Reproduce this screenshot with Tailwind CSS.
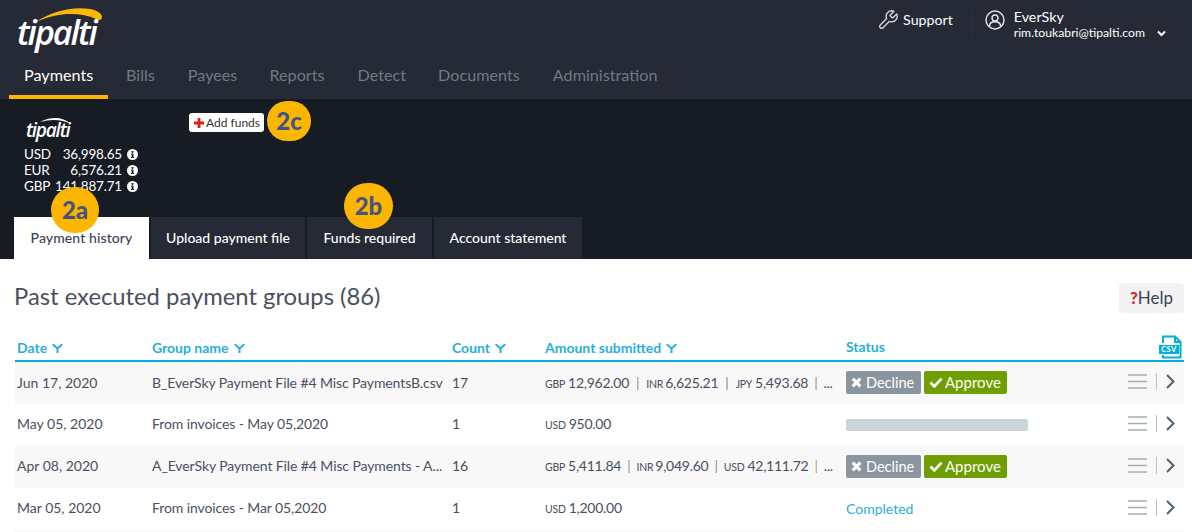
<!DOCTYPE html>
<html lang="en">
<head>
  <meta charset="UTF-8" />
  <title>Payments - Tipalti</title>
  <script src="https://cdn.jsdelivr.net/npm/@tailwindcss/browser@4"></script>
</head>
<body class="bg-white font-['Lato',sans-serif] text-[#3b4256] w-[1192px] h-[532px] overflow-hidden">

  <!-- top nav -->
  <header class="bg-[#252a36] h-[99px] flex flex-col relative">
    <div class="h-[54px] flex justify-between">
      <div class="relative ml-[18px] mt-[7px] w-[90px] h-[44px]">
        <svg class="absolute left-0 top-0 overflow-visible" width="90" height="20" viewBox="0 0 90 20"><path d="M18 15 C32 5 54 -1 72 2 C78 3 84 6 84 10 C84 13 81 14 78 12 C62 5 40 5 18 15 Z" fill="#fdb600"/></svg>
        <span class="absolute -left-[1px] top-[3px] text-[34px] leading-[44px] font-semibold italic text-white font-['Open_Sans',sans-serif] tracking-[-2px]">tipalti</span>
      </div>
      <div class="flex items-start pt-[8px]">
        <div class="flex items-center mt-[1px]">
          <svg class="w-[22px] h-[22px]" viewBox="0 0 24 24" fill="none" stroke="#d5d7da" stroke-width="1.5" stroke-linejoin="round"><path d="M14.7 6.3a1 1 0 0 0 0 1.4l1.6 1.6a1 1 0 0 0 1.4 0l3.77-3.77a6 6 0 0 1-7.94 7.94l-6.91 6.91a2.12 2.12 0 0 1-3-3l6.91-6.91a6 6 0 0 1 7.94-7.94l-3.76 3.76z"/></svg>
          <span class="ml-[4px] text-[14.2px] text-white">Support</span>
        </div>
        <div class="w-px h-[24px] bg-[#2e3340] ml-[18px] mr-[13px] mt-[4px]"></div>
        <svg class="w-[20px] h-[20px] mt-[2px]" viewBox="0 0 20 20" fill="none" stroke="#e6e7e9" stroke-width="1.4"><circle cx="10" cy="10" r="9"/><circle cx="10" cy="8" r="3"/><path d="M4.5 16c0-3 2.5-4.2 5.5-4.2s5.500 1.200 5.500 4.200"/></svg>
        <div class="ml-[9px] flex flex-col text-white">
          <span class="text-[14.3px] leading-[17px]">EverSky</span>
          <span class="text-[12.2px] leading-[15px] flex items-center">rim.toukabri@tipalti.com
            <svg class="ml-[12px] mt-[2px] w-[9px] h-[7px]" viewBox="0 0 9 7" fill="none" stroke="#fff" stroke-width="2"><path d="M1 1.500l3.500 3.500 3.500-3.500"/></svg>
          </span>
        </div>
        <div class="w-[26px]"></div>
      </div>
    </div>
    <nav class="flex ml-[9px] h-[45px] text-[16.2px] text-[#6f7a86]">
      <a class="px-[15px] pt-[9px] text-white border-b-[4px] border-[#fdb600] h-[45px] w-[99px] whitespace-nowrap">Payments</a>
      <a class="ml-[3px] px-[15px] pt-[9px]">Bills</a>
      <a class="px-[15px] pt-[9px] ml-[3px]">Payees</a>
      <a class="px-[15px] pt-[9px] ml-[2px]">Reports</a>
      <a class="px-[15px] pt-[9px] ml-[3px]">Detect</a>
      <a class="px-[15px] pt-[9px] ml-[2px]">Documents</a>
      <a class="px-[15px] pt-[9px] ml-[3px]">Administration</a>
    </nav>
  </header>

  <!-- funds band -->
  <section class="bg-[#171b24] h-[160px] relative flex flex-col justify-between">
    <div class="flex pl-[24px] pt-[14px] items-start">
      <div class="w-[165px]">
        <div class="relative w-[50px] h-[26px] ml-[2px] -mt-[1px]">
          <svg class="absolute left-[14px] top-[4px] overflow-visible" width="32" height="9" viewBox="0 0 32 9"><path d="M0 6 C10 1 22 0 31 8 C22 3 10 3 0 6 Z" fill="#fff"/></svg>
          <span class="absolute left-0 top-[7px] text-[19px] leading-[22px] font-semibold italic text-white font-['Open_Sans',sans-serif] tracking-[-1.2px]">tipalti</span>
        </div>
        <div class="text-white text-[13.5px] tracking-[-0.2px] leading-[16px] mt-[8px] w-[114px] grid grid-cols-[26px_1fr_16px] items-center whitespace-nowrap">
          <span>USD</span><span class="text-right">36,998.65</span><span class="text-right"><svg class="inline w-[11px] h-[11px] align-[-1px]" viewBox="0 0 12 12"><circle cx="6" cy="6" r="6" fill="#fff"/><path d="M5 2.200h2v1.800h-2zM4.500 5h2.500v3.800h.8v1h-3.400v-1h.7v-2.800h-.6z" fill="#171b24"/></svg></span>
          <span>EUR</span><span class="text-right">6,576.21</span><span class="text-right"><svg class="inline w-[11px] h-[11px] align-[-1px]" viewBox="0 0 12 12"><circle cx="6" cy="6" r="6" fill="#fff"/><path d="M5 2.200h2v1.800h-2zM4.500 5h2.500v3.800h.8v1h-3.400v-1h.7v-2.800h-.6z" fill="#171b24"/></svg></span>
          <span>GBP</span><span class="text-right">141,887.71</span><span class="text-right"><svg class="inline w-[11px] h-[11px] align-[-1px]" viewBox="0 0 12 12"><circle cx="6" cy="6" r="6" fill="#fff"/><path d="M5 2.200h2v1.800h-2zM4.500 5h2.500v3.800h.8v1h-3.400v-1h.7v-2.800h-.6z" fill="#171b24"/></svg></span>
        </div>
      </div>
      <button class="bg-white rounded-[3px] h-[19px] w-[75px] flex items-center pl-[5px] text-[12px] text-[#333]">
        <svg class="w-[10px] h-[10px] mr-[2px]" viewBox="0 0 9 9"><path d="M3.200 0h2.600v3.200h3.200v2.600h-3.200v3.200h-2.600v-3.200h-3.200v-2.600h3.200z" fill="#d9261c"/></svg>Add funds
      </button>
    </div>

    <div class="flex pl-[14px] h-[42px] text-[14px] gap-[2px] text-white font-medium">
      <a class="w-[135px] pb-[2px] bg-white text-[#3b4256] flex items-center justify-center tracking-[0.1px]">Payment history</a>
      <a class="w-[154px] pb-[2px] bg-[#252a36] flex items-center justify-center">Upload payment file</a>
      <a class="w-[125px] pb-[2px] bg-[#252a36] flex items-center justify-center">Funds required</a>
      <a class="w-[148px] pb-[2px] bg-[#252a36] flex items-center justify-center">Account statement</a>
    </div>

    <!-- callout badges -->
    <span class="absolute left-[51px] top-[88px] w-[48px] h-[46px] rounded-full bg-[#fdb600] text-[#45557f] text-[24px] font-black flex items-center justify-center">2a</span>
    <span class="absolute left-[344px] top-[84px] w-[49px] h-[46px] rounded-full bg-[#fdb600] text-[#45557f] text-[24px] font-black flex items-center justify-center">2b</span>
    <span class="absolute left-[267px] top-[2px] w-[44px] h-[40px] rounded-full bg-[#fdb600] text-[#45557f] text-[24px] font-black flex items-center justify-center">2c</span>
  </section>

  <!-- main content -->
  <main class="pr-[8px] pl-[15px]">
    <div class="flex justify-between items-start h-[61px] pt-[23px]">
      <h1 class="text-[23.8px] leading-[29px] text-[#4a505e] -ml-px">Past executed payment groups (86)</h1>
      <button class="mt-[1px] w-[65px] h-[30px] bg-[#f3f3f3] rounded-[4px] text-[17px] text-[#3b4256] flex items-center justify-center"><span class="text-[#d9261c] font-black">?</span>Help</button>
    </div>

    <div class="h-[42px] border-b-[2px] border-[#00b0d8] pl-[2px] grid grid-cols-[135px_300px_93px_301px_1fr] items-end pb-[2px] text-[14px] font-bold text-[#2aaedb]">
      <div class="flex items-center gap-[5px]">Date <svg class="w-[11px] h-[10px]" viewBox="0 0 11 10" fill="none" stroke="#2aaedb" stroke-width="2"><path d="M1 1c1 3 4.500 2.500 4.500 5.500v3.500M10 1c-1 3-4.500 2.500-4.500 5.500"/></svg></div>
      <div class="flex items-center gap-[5px]">Group name <svg class="w-[11px] h-[10px]" viewBox="0 0 11 10" fill="none" stroke="#2aaedb" stroke-width="2"><path d="M1 1c1 3 4.500 2.500 4.500 5.500v3.500M10 1c-1 3-4.500 2.500-4.500 5.500"/></svg></div>
      <div class="flex items-center gap-[5px]">Count <svg class="w-[11px] h-[10px]" viewBox="0 0 11 10" fill="none" stroke="#2aaedb" stroke-width="2"><path d="M1 1c1 3 4.500 2.500 4.500 5.500v3.500M10 1c-1 3-4.500 2.500-4.500 5.500"/></svg></div>
      <div class="flex items-center gap-[5px]">Amount submitted <svg class="w-[11px] h-[10px]" viewBox="0 0 11 10" fill="none" stroke="#2aaedb" stroke-width="2"><path d="M1 1c1 3 4.500 2.500 4.500 5.500v3.500M10 1c-1 3-4.500 2.500-4.500 5.500"/></svg></div>
      <div class="flex items-center justify-between">Status
        <svg class="w-[23px] h-[25px] -mb-[2px] mr-[2px]" viewBox="0 0 23 25" fill="none"><path d="M4 8V1.500h12l5.500 5.500v15.500H4V20" stroke="#00b0d8" stroke-width="2"/><path d="M16 1.500v5.500h5.500" stroke="#00b0d8" stroke-width="2"/><rect x="0" y="10" width="20" height="9" fill="#00b0d8"/><text x="10" y="17.200" text-anchor="middle" font-size="7.500" font-weight="700" font-family="Lato" fill="#fff" letter-spacing="0.500">CSV</text></svg>
      </div>
    </div>

    <div class="text-[14px] text-[#4a5061]">
      <div class="h-[42px] bg-[#f8f8f8] pl-[2px] pb-[2px] grid grid-cols-[135px_300px_93px_301px_1fr] items-center">
        <div>Jun 17, 2020</div>
        <div class="whitespace-nowrap tracking-[-0.1px]">B_EverSky Payment File #4 Misc PaymentsB.csv</div>
        <div>17</div>
        <div class="flex items-baseline whitespace-nowrap tracking-[-0.25px]"><span class="text-[10.5px] mr-[3px]">GBP</span>12,962.00<span class="mx-[7px] text-[#8a8f99]">|</span><span class="text-[10.5px] mr-[2px]">INR</span>6,625.21<span class="mx-[7px] text-[#a0708f]">|</span><span class="text-[10.5px] mr-[3px]">JPY</span>5,493.68<span class="mx-[6px] text-[#8a8f99]">|</span>...</div>
        <div class="flex items-center justify-between">
          <div class="flex gap-[3px] mt-[1px]">
            <span class="w-[75px] h-[23px] pl-[5px] bg-[#8a959f] rounded-[2px] text-white text-[14.5px] flex items-center gap-[4px]"><svg class="w-[11px] h-[11px]" viewBox="0 0 10 10"><path d="M1.500 1.500l7 7M8.500 1.500l-7 7" stroke="#fff" stroke-width="2.800"/></svg>Decline</span>
            <span class="w-[83px] h-[23px] pl-[5px] bg-[#6f9e00] rounded-[2px] text-white text-[15px] flex items-center gap-[2px]"><svg class="w-[14px] h-[11px]" viewBox="0 0 12 10" fill="none"><path d="M1 5l3.500 3.500 6.500-7" stroke="#fff" stroke-width="2.500"/></svg>Approve</span>
          </div>
          <div class="flex items-center mr-[9px] mb-[2px]">
            <svg class="w-[19px] h-[15px]" viewBox="0 0 19 15"><path d="M0 1h19M0 7.500h19M0 14h19" stroke="#a5afb5" stroke-width="1.700"/></svg>
            <div class="w-px h-[17px] bg-[#b9c0c5] mx-[9px]"></div>
            <svg class="w-[9px] h-[15px]" viewBox="0 0 9 15" fill="none"><path d="M1 1l6.500 6.500-6.500 6.500" stroke="#4f626e" stroke-width="2"/></svg>
          </div>
        </div>
      </div>
      <div class="h-[42px] pl-[2px] pb-[4px] grid grid-cols-[135px_300px_93px_301px_1fr] items-center">
        <div>May 05, 2020</div>
        <div class="whitespace-nowrap tracking-[-0.1px]">From invoices - May 05,2020</div>
        <div>1</div>
        <div class="flex items-baseline tracking-[-0.25px]"><span class="text-[10.5px] mr-[3px]">USD</span>950.00</div>
        <div class="flex items-center justify-between">
          <div class="w-[182px] h-[12px] mt-[4px] bg-[#c9d5d9] rounded-[2px]"></div>
          <div class="flex items-center mr-[9px]">
            <svg class="w-[19px] h-[15px]" viewBox="0 0 19 15"><path d="M0 1h19M0 7.500h19M0 14h19" stroke="#a5afb5" stroke-width="1.700"/></svg>
            <div class="w-px h-[17px] bg-[#b9c0c5] mx-[9px]"></div>
            <svg class="w-[9px] h-[15px]" viewBox="0 0 9 15" fill="none"><path d="M1 1l6.500 6.500-6.500 6.500" stroke="#4f626e" stroke-width="2"/></svg>
          </div>
        </div>
      </div>
      <div class="h-[42px] bg-[#f8f8f8] pl-[2px] pb-[4px] grid grid-cols-[135px_300px_93px_301px_1fr] items-center">
        <div>Apr 08, 2020</div>
        <div class="whitespace-nowrap tracking-[-0.1px]">A_EverSky Payment File #4 Misc Payments - A...</div>
        <div>16</div>
        <div class="flex items-baseline whitespace-nowrap tracking-[-0.25px]"><span class="text-[10.5px] mr-[3px]">GBP</span>5,411.84<span class="mx-[6px] text-[#b08a70]">|</span><span class="text-[10.5px] mr-[2px]">INR</span>9,049.60<span class="mx-[6px] text-[#8a8f99]">|</span><span class="text-[10.5px] mr-[3px]">USD</span>42,111.72<span class="mx-[6px] text-[#c09a70]">|</span>...</div>
        <div class="flex items-center justify-between">
          <div class="flex gap-[3px] mt-[3px]">
            <span class="w-[75px] h-[23px] pl-[5px] bg-[#8a959f] rounded-[2px] text-white text-[14.5px] flex items-center gap-[4px]"><svg class="w-[11px] h-[11px]" viewBox="0 0 10 10"><path d="M1.500 1.500l7 7M8.500 1.500l-7 7" stroke="#fff" stroke-width="2.800"/></svg>Decline</span>
            <span class="w-[83px] h-[23px] pl-[5px] bg-[#6f9e00] rounded-[2px] text-white text-[15px] flex items-center gap-[2px]"><svg class="w-[14px] h-[11px]" viewBox="0 0 12 10" fill="none"><path d="M1 5l3.500 3.500 6.500-7" stroke="#fff" stroke-width="2.500"/></svg>Approve</span>
          </div>
          <div class="flex items-center mr-[9px]">
            <svg class="w-[19px] h-[15px]" viewBox="0 0 19 15"><path d="M0 1h19M0 7.500h19M0 14h19" stroke="#a5afb5" stroke-width="1.700"/></svg>
            <div class="w-px h-[17px] bg-[#b9c0c5] mx-[9px]"></div>
            <svg class="w-[9px] h-[15px]" viewBox="0 0 9 15" fill="none"><path d="M1 1l6.500 6.500-6.500 6.500" stroke="#4f626e" stroke-width="2"/></svg>
          </div>
        </div>
      </div>
      <div class="h-[42px] pl-[2px] pb-[4px] grid grid-cols-[135px_300px_93px_301px_1fr] items-center">
        <div>Mar 05, 2020</div>
        <div class="whitespace-nowrap tracking-[-0.1px]">From invoices - Mar 05,2020</div>
        <div>1</div>
        <div class="flex items-baseline tracking-[-0.25px]"><span class="text-[10.5px] mr-[3px]">USD</span>1,200.00</div>
        <div class="flex items-center justify-between">
          <span class="text-[#2aaedb] mt-[2px]">Completed</span>
          <div class="flex items-center mr-[9px]">
            <svg class="w-[19px] h-[15px]" viewBox="0 0 19 15"><path d="M0 1h19M0 7.500h19M0 14h19" stroke="#a5afb5" stroke-width="1.700"/></svg>
            <div class="w-px h-[17px] bg-[#b9c0c5] mx-[9px]"></div>
            <svg class="w-[9px] h-[15px]" viewBox="0 0 9 15" fill="none"><path d="M1 1l6.500 6.500-6.500 6.500" stroke="#4f626e" stroke-width="2"/></svg>
          </div>
        </div>
      </div>
      <div class="h-[2px] bg-[#f8f8f8]"></div>
    </div>
  </main>
</body>
</html>
